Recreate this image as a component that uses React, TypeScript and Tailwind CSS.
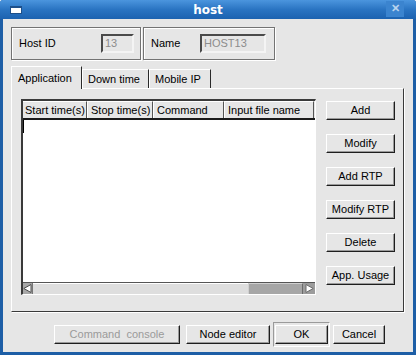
import React from "react";

function Btn({ children, w, disabled }: { children: React.ReactNode; w: string; disabled?: boolean }) {
  return (
    <div
      className={`${w} h-[19px] flex items-center justify-center bg-[#e6e6e6] border border-t-white border-l-white border-r-[#1e1e1e] border-b-[#1e1e1e] shadow-[inset_-1px_-1px_0_#9a9a9a] whitespace-pre ${disabled ? "text-[#9a9a9a]" : "text-black"}`}
    >
      {children}
    </div>
  );
}

function Field({ value, w }: { value: string; w: string }) {
  return (
    <div className={`${w} h-[19px] flex items-center pl-[2px] bg-[#e6e6e6] border-2 border-t-[#4a4a4a] border-l-[#4a4a4a] border-r-[#f4f4f4] border-b-[#f4f4f4] text-[#8c8c8c]`}>
      {value}
    </div>
  );
}

export default function App() {
  return (
    <div className="w-[416px] h-[355px] flex flex-col bg-[#1d5ea6] rounded-t-[3px] font-['Liberation_Sans',Arial,sans-serif] text-[11px] text-black leading-none">
      {/* title bar */}
      <div className="h-[19px] flex items-center bg-gradient-to-b from-[#4b95de] via-[#2a74c2] to-[#1c62b0] rounded-t-[3px]">
        <div className="w-[30px] pl-[10px] flex items-center">
          <div className="w-[12px] h-[8px] bg-white border-t-2 border-[#1d4f8a] border-x border-b"></div>
        </div>
        <div className="flex-1 text-center text-white font-bold font-['DejaVu_Sans',sans-serif] text-[12px]">host</div>
        <div className="w-[30px] flex justify-start">
          <div className="w-[18px] h-[16px] mb-[2px] bg-[#3b84cf] flex items-center justify-center text-[#b9d3ee] font-bold text-[11px]">✕</div>
        </div>
      </div>

      {/* content */}
      <div className="flex-1 mx-[3px] mb-[3px] bg-[#e6e6e6] flex flex-col pt-[8px] pl-[8px]">
        {/* group boxes */}
        <div className="flex gap-[2px] h-[33px]">
          <div className="w-[130px] h-full flex items-center pl-[7px] pr-[6px] border border-[#737373] shadow-[inset_1px_1px_0_#fff,1px_1px_0_#fff]">
            <span className="flex-1">Host ID</span>
            <Field value="13" w="w-[33px]" />
          </div>
          <div className="w-[132px] h-full flex items-center pl-[7px] pr-[8px] border border-[#737373] shadow-[inset_1px_1px_0_#fff,1px_1px_0_#fff]">
            <span className="flex-1">Name</span>
            <Field value="HOST13" w="w-[66px]" />
          </div>
        </div>

        {/* tabs */}
        <div className="mt-[6px] h-[22px] flex items-end">
          <div className="w-[71px] h-[23px] -mb-[1px] bg-[#e6e6e6] flex items-center pl-[6px] border-t border-l border-white border-r border-r-[#2a2a2a] relative z-10">
            Application
          </div>
          <div className="w-[67px] h-[19px] flex items-center pl-[5px] border-t border-l border-white border-r border-r-[#2a2a2a]">
            Down time
          </div>
          <div className="w-[62px] h-[19px] flex items-center pl-[5px] border-t border-l border-white border-r border-r-[#2a2a2a]">
            Mobile IP
          </div>
        </div>

        {/* panel */}
        <div className="w-[393px] h-[224px] flex border border-t-white border-l-white border-r-[#3a3a3a] border-b-[#3a3a3a] shadow-[1px_1px_0_#fff] pl-[9px] pt-[10px]">
          {/* table */}
          <div className="w-[295px] h-[196px] flex flex-col border-t-2 border-l-2 border-t-[#3a3a3a] border-l-[#3a3a3a] border-r border-b border-r-white border-b-white">
            <div className="h-[19px] flex border-b-2 border-[#1a1a1a] bg-[#e6e6e6]">
              <div className="w-[64px] flex items-center pl-[2px] border-r border-r-[#555] border-t border-t-white">Start time(s)</div>
              <div className="w-[66px] flex items-center pl-[3px] border-r border-r-[#555] border-l border-l-white border-t border-t-white">Stop time(s)</div>
              <div className="w-[71px] flex items-center pl-[3px] border-r border-r-[#555] border-l border-l-white border-t border-t-white">Command</div>
              <div className="w-[90px] flex items-center pl-[3px] border-r border-r-[#555] border-l border-l-white border-t border-t-white">Input file name</div>
              <div className="flex-1"></div>
            </div>
            <div className="flex-1 bg-white flex">
              <div className="w-[1px] h-[13px] bg-black"></div>
            </div>
            {/* scrollbar */}
            <div className="h-[12px] flex bg-[#d8d8d8] border-t border-[#555]">
              <div className="w-[10px] h-full bg-[#a8a8a8] flex items-center justify-center border-r border-[#777]">
                <svg width="9" height="9" viewBox="0 0 9 9">
                  <polygon points="8,0.5 8,8.5 0.8,4.5" fill="#ffffff" stroke="#4a4a4a" strokeWidth="1" />
                </svg>
              </div>
              <div className="w-[215px] h-full bg-[#dedede] border-t border-white"></div>
              <div className="w-[55px] h-full bg-[#a6a6a6] border-t border-l border-[#d0d0d0] border-r border-r-[#6a6a6a]"></div>
              <div className="flex-1 h-full bg-[#9c9c9c] flex items-center justify-center">
                <svg width="9" height="9" viewBox="0 0 9 9">
                  <polygon points="1,0.5 1,8.5 8.2,4.5" fill="#ffffff" stroke="#6a6a6a" strokeWidth="1" />
                </svg>
              </div>
            </div>
          </div>

          {/* side buttons */}
          <div className="ml-[10px] pt-[2px] flex flex-col gap-[14px]">
            <Btn w="w-[69px]">Add</Btn>
            <Btn w="w-[69px]">Modify</Btn>
            <Btn w="w-[69px]">Add RTP</Btn>
            <Btn w="w-[69px]">Modify RTP</Btn>
            <Btn w="w-[69px]">Delete</Btn>
            <Btn w="w-[69px]">App. Usage</Btn>
          </div>
        </div>

        {/* bottom buttons */}
        <div className="mt-[10px] h-[25px] flex items-center pl-[43px]">
          <Btn w="w-[126px]" disabled>Command  console</Btn>
          <div className="ml-[6px]">
            <Btn w="w-[84px]">Node editor</Btn>
          </div>
          <div className="ml-[3px] w-[57px] h-[25px] flex items-center justify-center border border-t-[#9a9a9a] border-l-[#9a9a9a] border-r-white border-b-white">
            <Btn w="w-[53px]">OK</Btn>
          </div>
          <div className="ml-[3px]">
            <Btn w="w-[52px]">Cancel</Btn>
          </div>
        </div>
      </div>
    </div>
  );
}
